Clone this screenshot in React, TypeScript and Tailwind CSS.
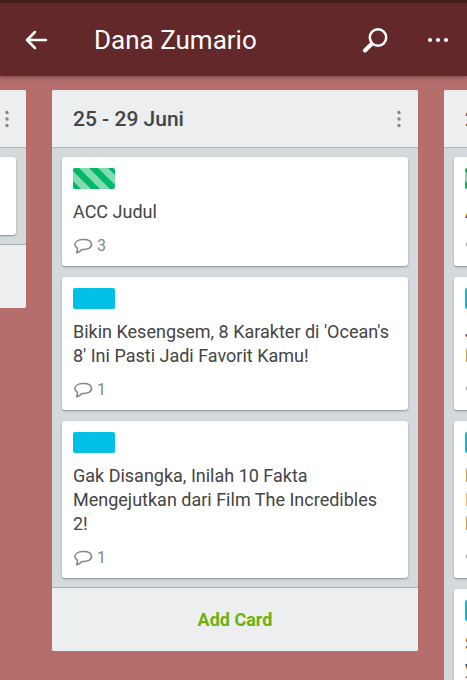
import React from "react";

interface Card {
  label?: "green" | "blue";
  lines: string[];
  comments?: number;
}

interface ListProps {
  title?: string;
  cards: Card[];
  className?: string;
}

const previousCards: Card[] = [{ lines: [] }];

const currentCards: Card[] = [
  { label: "green", lines: ["ACC Judul"], comments: 3 },
  {
    label: "blue",
    lines: ["Bikin Kesengsem, 8 Karakter di 'Ocean's 8' Ini Pasti Jadi Favorit Kamu!"],
    comments: 1,
  },
  {
    label: "blue",
    lines: ["Gak Disangka, Inilah 10 Fakta Mengejutkan dari Film The Incredibles 2!"],
    comments: 1,
  },
];

// only the first pixels of these are on screen
const nextCards: Card[] = [
  { label: "green", lines: ["A"], comments: 3 },
  { label: "blue", lines: ["J", "F"], comments: 1 },
  { label: "blue", lines: ["F", "I", "K"], comments: 1 },
  { label: "blue", lines: ["S", "y", "T"], comments: 1 },
];

const CommentIcon = () => (
  <svg width="19" height="16" viewBox="0 0 19 16" fill="none" aria-hidden="true">
    <path
      d="M9.500 1.500C4.700 1.500 1 3.400 1 6.500c0 1.700 1 2.900 2.400 3.700.3 1.500 0 3-.8 4.500 2.400-.5 4.200-1.700 5.400-3.200 5.500.3 9.500-1.700 9.500-5 0-3.200-3.500-5-8-5z"
      stroke="#85888b"
      strokeWidth="1.6"
      strokeLinejoin="round"
    />
  </svg>
);

const StripedLabel = () => (
  <svg width="42" height="21" viewBox="0 0 42 21" className="rounded-[2px]" aria-hidden="true">
    <rect width="42" height="21" fill="#00b865" />
    <path d="M-13 0h10l21 21H8zM6 0h10l21 21H27zM25 0h10l21 21H46z" fill="#83dbb3" />
  </svg>
);

const CardItem = ({ card }: { card: Card }) => (
  <li className="min-h-[78px] rounded-[3px] bg-white pt-[11px] pr-3.5 pb-2.5 pl-[11px] shadow-[0_1px_2px_rgba(0,0,0,0.35)]">
    {card.label === "green" && <StripedLabel />}
    {card.label === "blue" && <div className="h-[21px] w-[42px] rounded-[2px] bg-[#00c0e6]" />}
    {card.lines.length > 0 && (
      <h3 className="mt-[11px] text-lg leading-6 text-[#444]">
        {card.lines.map((line) => (
          <span key={line} className="block">
            {line}
          </span>
        ))}
      </h3>
    )}
    {card.comments && (
      <div className="mt-3 flex h-5 items-center gap-1 pl-px text-base leading-5 text-[#85888b]">
        <CommentIcon />
        <span>{card.comments}</span>
      </div>
    )}
  </li>
);

const List = ({ title, cards, className = "" }: ListProps) => (
  <section className={`overflow-hidden rounded-[2px] bg-[#d4d9dc] ${className}`}>
    <header className="flex h-[58px] items-center border-b border-[#b0b5b9] bg-[#edeef0] pr-[15px] pl-[21px]">
      {title && <h2 className="text-[21px] leading-7 font-medium text-[#444]">{title}</h2>}
      <button type="button" aria-label="List menu" className="ml-auto">
        <svg width="8" height="18" viewBox="0 0 8 18" fill="#85888b" aria-hidden="true">
          <circle cx="4" cy="2.500" r="1.700" />
          <circle cx="4" cy="9" r="1.700" />
          <circle cx="4" cy="15.500" r="1.700" />
        </svg>
      </button>
    </header>
    <ul className="flex flex-col gap-[11px] px-2.5 py-[9px]">
      {cards.map((card, i) => (
        <CardItem key={i} card={card} />
      ))}
    </ul>
    <button
      type="button"
      className="block h-16 w-full border-t border-[#a9aeb2] bg-[#edeef0] text-lg font-bold text-[#6fb10a]"
    >
      Add Card
    </button>
  </section>
);

const App: React.FC = () => {
  return (
    <div className="flex h-screen flex-col overflow-hidden bg-[#b56e6b] font-[Roboto,sans-serif]">
      <header className="z-10 flex h-[76px] shrink-0 items-center border-t-[3px] border-[#42201c] bg-[#632829] pr-[18px] pl-[25px] text-white shadow-[0_1px_4px_rgba(0,0,0,0.4)]">
        <button type="button" aria-label="Back">
          <svg width="23" height="20" viewBox="0 0 23 20" fill="none" stroke="currentColor" strokeWidth="2.500" strokeLinecap="round" strokeLinejoin="round" aria-hidden="true">
            <path d="M21 10H2.500M10 2L2 10l8 8" />
          </svg>
        </button>
        <h1 className="ml-[46px] flex-1 text-[26px] leading-8">Dana Zumario</h1>
        <button type="button" aria-label="Search" className="mr-[39px]">
          <svg width="26" height="26" viewBox="0 0 26 26" fill="none" stroke="currentColor" strokeLinecap="round" aria-hidden="true">
            <circle cx="16" cy="10.500" r="8.200" strokeWidth="2.500" />
            <path d="M9.500 17L3 23.500" strokeWidth="4" />
          </svg>
        </button>
        <button type="button" aria-label="More">
          <svg width="22" height="6" viewBox="0 0 22 6" fill="currentColor" aria-hidden="true">
            <circle cx="3" cy="3" r="2.100" />
            <circle cx="11" cy="3" r="2.100" />
            <circle cx="19" cy="3" r="2.100" />
          </svg>
        </button>
      </header>

      <main className="grid flex-1 grid-cols-[26px_minmax(0,1fr)_23px] items-start gap-x-[26px] pt-3.5">
        <div className="flex justify-end overflow-hidden">
          <List cards={previousCards} className="w-[366px] shrink-0" />
        </div>
        <List title="25 - 29 Juni" cards={currentCards} />
        <div className="flex overflow-hidden">
          <List title="2" cards={nextCards} className="w-[366px] shrink-0" />
        </div>
      </main>
    </div>
  );
};

export default App;
